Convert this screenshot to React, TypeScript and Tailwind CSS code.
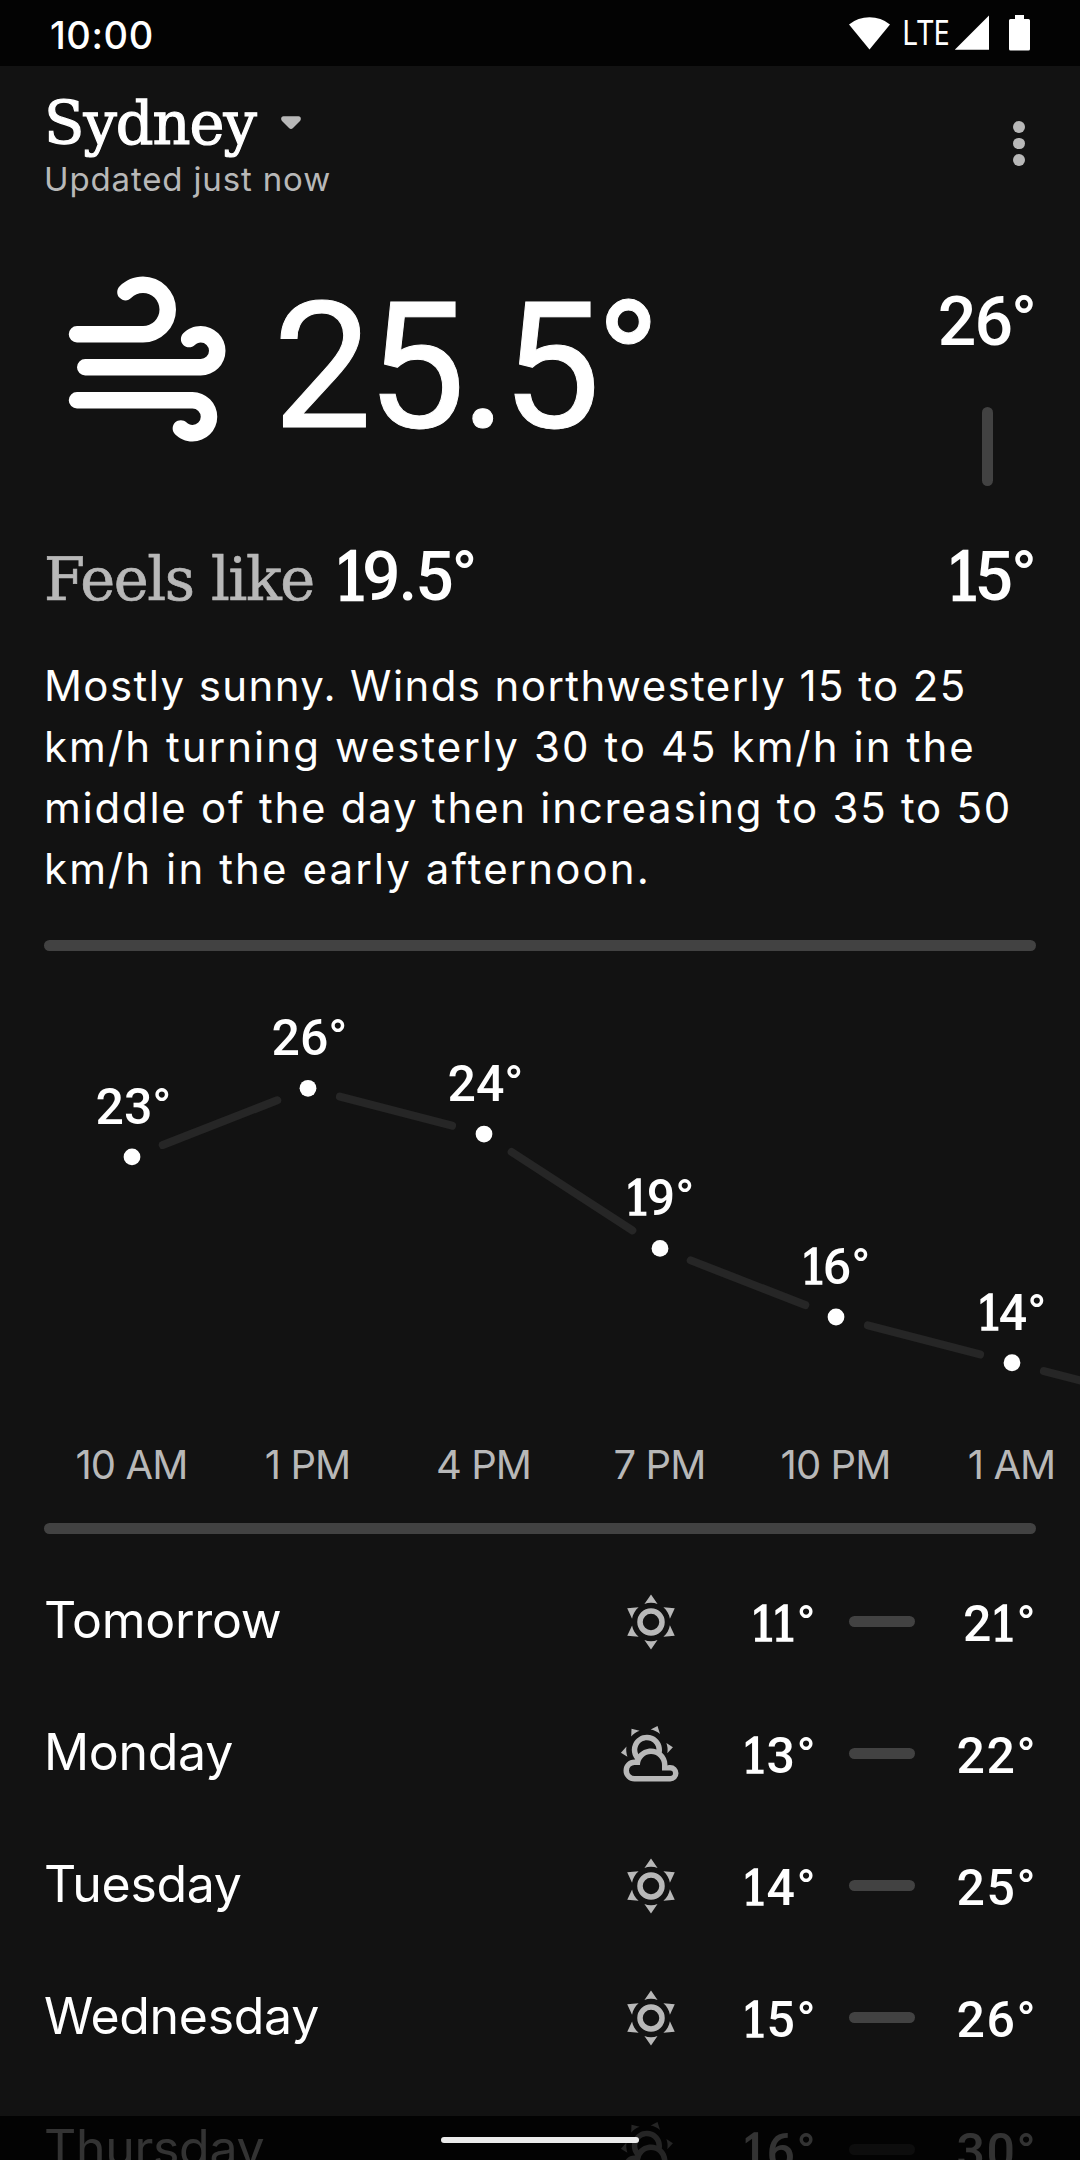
const SUN =
  "M12,7A5,5 0 0,1 17,12A5,5 0 0,1 12,17A5,5 0 0,1 7,12A5,5 0 0,1 12,7M12,9A3,3 0 0,0 9,12A3,3 0 0,0 12,15A3,3 0 0,0 15,12A3,3 0 0,0 12,9M12,2L14.39,5.42C13.65,5.15 12.84,5 12,5C11.16,5 10.35,5.15 9.61,5.42L12,2M3.34,7L7.5,6.65C6.9,7.16 6.36,7.78 5.94,8.5C5.5,9.24 5.25,10 5.11,10.79L3.34,7M3.36,17L5.12,13.23C5.26,14 5.53,14.78 5.95,15.5C6.37,16.24 6.91,16.86 7.5,17.37L3.36,17M20.65,7L18.88,10.79C18.74,10 18.47,9.23 18.05,8.5C17.63,7.78 17.1,7.15 16.5,6.64L20.65,7M20.64,17L16.5,17.36C17.09,16.85 17.62,16.22 18.04,15.5C18.46,14.77 18.73,14 18.87,13.21L20.64,17M12,22L9.59,18.56C10.33,18.83 11.14,19 12,19C12.82,19 13.63,18.83 14.37,18.56L12,22Z";
const PARTLY =
  "M12.74,5.47C15.1,6.5 16.35,9.03 15.92,11.46C17.19,12.56 18,14.19 18,16V16.17C18.31,16.06 18.65,16 19,16A3,3 0 0,1 22,19A3,3 0 0,1 19,22H6A4,4 0 0,1 2,18A4,4 0 0,1 6,14H6.27C5,12.45 4.6,10.24 5.5,8.26C6.72,5.5 9.97,4.24 12.74,5.47M11.93,7.3C10.16,6.5 8.09,7.31 7.31,9.07C6.85,10.09 6.93,11.22 7.41,12.13C8.5,10.83 10.16,10 12,10C12.7,10 13.38,10.12 14,10.34C13.94,9.06 13.18,7.86 11.93,7.3M13.55,3.64C13,3.4 12.45,3.23 11.88,3.12L14.37,1.82L15.27,4.71C14.76,4.29 14.19,3.93 13.55,3.64M6.09,4.44C5.6,4.79 5.17,5.19 4.8,5.63L4.91,2.82L7.87,3.5C7.25,3.71 6.65,4.03 6.09,4.44M18,9.71C17.91,9.12 17.78,8.55 17.59,8L19.97,9.5L17.92,11.73C18.03,11.08 18.05,10.4 18,9.71M3.04,11.3C3.11,11.9 3.24,12.47 3.43,13L1.06,11.5L3.1,9.28C2.97,9.93 2.97,10.61 3.04,11.3M19,18H16V16A4,4 0 0,0 12,12A4,4 0 0,0 8,16H6A2,2 0 0,0 4,18A2,2 0 0,0 6,20H19A1,1 0 0,0 20,19A1,1 0 0,0 19,18Z";
const WIND =
  "M4,10A1,1 0 0,1 3,9A1,1 0 0,1 4,8H12A2,2 0 0,0 14,6A2,2 0 0,0 12,4C11.45,4 10.95,4.22 10.59,4.59C10.2,5 9.56,5 9.17,4.59C8.78,4.2 8.78,3.56 9.17,3.17C9.9,2.45 10.9,2 12,2A4,4 0 0,1 16,6A4,4 0 0,1 12,10H4M19,12A1,1 0 0,0 20,11A1,1 0 0,0 19,10C18.72,10 18.47,10.11 18.29,10.29C17.9,10.68 17.27,10.68 16.88,10.29C16.5,9.9 16.5,9.27 16.88,8.88C17.42,8.34 18.17,8 19,8A3,3 0 0,1 22,11A3,3 0 0,1 19,14H5A1,1 0 0,1 4,13A1,1 0 0,1 5,12H19M18,18H4A1,1 0 0,1 3,17A1,1 0 0,1 4,16H18A3,3 0 0,1 21,19A3,3 0 0,1 18,22C17.17,22 16.42,21.66 15.88,21.12C15.5,20.73 15.5,20.1 15.88,19.71C16.27,19.32 16.9,19.32 17.29,19.71C17.47,19.89 17.72,20 18,20A1,1 0 0,0 19,19A1,1 0 0,0 18,18Z";

const SPACING = 176;
const PER_DEGREE = 22.87;

const hours = [
  { time: "10 AM", temp: 23 },
  { time: "1 PM", temp: 26 },
  { time: "4 PM", temp: 24 },
  { time: "7 PM", temp: 19 },
  { time: "10 PM", temp: 16 },
  { time: "1 AM", temp: 14 },
];

const days = [
  { name: "Tomorrow", icon: SUN, low: 11, high: 21 },
  { name: "Monday", icon: PARTLY, low: 13, high: 22 },
  { name: "Tuesday", icon: SUN, low: 14, high: 25 },
  { name: "Wednesday", icon: SUN, low: 15, high: 26 },
  { name: "Thursday", icon: PARTLY, low: 16, high: 30 },
];

const summary = [
  { text: "Mostly sunny. Winds northwesterly 15 to 25", tracking: "tracking-[1.4px]" },
  { text: "km/h turning westerly 30 to 45 km/h in the", tracking: "tracking-[2.07px]" },
  { text: "middle of the day then increasing to 35 to 50", tracking: "tracking-[1.75px]" },
  { text: "km/h in the early afternoon.", tracking: "tracking-[2.1px]" },
];

function Glyph({ d, className }: { d: string; className: string }) {
  return (
    <svg viewBox="0 0 24 24" className={className} fill="currentColor">
      <path d={d} />
    </svg>
  );
}

/* Temperature figures; the numeral one is set in a slab face. */
function Temp({ value, className, one = "mx-[-0.1em]" }: { value: string; className: string; one?: string }) {
  return (
    <span className={"whitespace-nowrap font-['Roboto',sans-serif] font-medium [font-kerning:none] " + className}>
      {value.split("").map((c, i) =>
        c === "1" ? (
          <span
            key={i}
            className={
              "font-['DejaVu_Serif_Condensed','DejaVu_Serif',serif] text-[0.965em] leading-[0] font-normal [-webkit-text-stroke:0.035em] " +
              one
            }
          >
            {c}
          </span>
        ) : (
          c
        ),
      )}
    </span>
  );
}

function StatusBar() {
  return (
    <div className="flex h-[66px] shrink-0 items-start bg-[#030303] pl-[50px]">
      <span className="mt-[11px] font-['Inter',sans-serif] text-[38px] leading-[48px] font-medium tracking-[0.6px]">
        10:00
      </span>
      <svg className="mt-[15px] ml-auto h-[35px] w-[41px]" viewBox="0 0 41 35" fill="white">
        <path d="M0 9.4A33 33 0 0 1 41 9.4L20.5 34.5Z" />
      </svg>
      <span className="mt-[8px] ml-[12px] w-[53px] origin-left scale-x-[0.87] font-['Noto_Sans',sans-serif] text-[34px] leading-[48px]">
        LTE
      </span>
      <svg className="mt-[15px] h-[35px] w-[34px]" viewBox="0 0 34 35" fill="white">
        <path d="M34 0.5V34.7H-0.3Z" />
      </svg>
      <svg className="mt-[15px] mr-[50px] ml-[20px] h-[36px] w-[21px]" viewBox="0 0 21 36" fill="white">
        <path d="M6 0H15V4H19.5A1.5 1.5 0 0 1 21 5.5V34A1.5 1.5 0 0 1 19.5 35.5H1.5A1.5 1.5 0 0 1 0 34V5.5A1.5 1.5 0 0 1 1.5 4H6Z" />
      </svg>
    </div>
  );
}

function Header() {
  return (
    <header className="flex h-[133px] shrink-0 justify-between pt-[26px] pr-[55.5px] pl-[44px]">
      <div>
        <div className="flex items-start">
          <h1 className="font-['DejaVu_Serif',serif] text-[59px] leading-[64px] tracking-[-1px] [-webkit-text-stroke:1.2px]">
            Sydney
          </h1>
          <svg className="mt-[24px] ml-[25px] h-[13px] w-[20px] text-[#b8b8b8]" viewBox="0 0 20 13" fill="currentColor">
            <path d="M2.5 0.2H17.5C19.8 0.2 20.6 3.2 19 5L12 12Q10 14 8 12L1 5C-0.6 3.2 0.2 0.2 2.5 0.2Z" />
          </svg>
        </div>
        <p className="mt-[3px] font-['Inter',sans-serif] text-[33px] leading-[40px] tracking-[0.85px] text-[#b8b8b8]">
          Updated just now
        </p>
      </div>
      <div className="flex flex-col gap-[5px] pt-[29px]">
        <i className="size-[11.5px] rounded-full bg-[#b8b8b8]" />
        <i className="size-[11.5px] rounded-full bg-[#b8b8b8]" />
        <i className="size-[11.5px] rounded-full bg-[#b8b8b8]" />
      </div>
    </header>
  );
}

function Current() {
  return (
    <section className="flex h-[418px] shrink-0 justify-between pr-[45px] pl-[44px]">
      <div className="pt-[60px]">
        <div className="flex h-[198px]">
          <Glyph d={WIND} className="mt-[0.5px] size-[198px] shrink-0" />
          <span className="mt-[9px] ml-[31px] font-['Roboto',sans-serif] text-[176px] leading-[198px] tracking-[-5.2px] whitespace-nowrap [-webkit-text-stroke:1px] [font-kerning:none]">
            25.5°
          </span>
        </div>
        <div className="mt-[80px] flex items-baseline">
          <span className="font-['DejaVu_Serif',serif] text-[59px] leading-[80px] tracking-[-1.4px] text-[#b8b8b8] [-webkit-text-stroke:0.7px]">
            Feels like
          </span>
          <Temp value="19.5°" className="ml-[26px] text-[68px] leading-[80px] tracking-[-0.033em]" />
        </div>
      </div>
      <div className="flex flex-col items-end pt-[83px]">
        <Temp value="26°" className="text-[68px] leading-[80px] tracking-[-0.03em]" />
        <div className="mt-[45px] mr-[42px] h-[79px] w-[11px] rounded-full bg-[#424242]" />
        <Temp value="15°" className="mt-[51px] text-[68px] leading-[80px] tracking-[-0.03em]" />
      </div>
    </section>
  );
}

function Divider({ className }: { className: string }) {
  return <div className={"mx-[44px] h-[11px] shrink-0 rounded-full bg-[#424242] " + className} />;
}

function Hourly() {
  const points = [...hours.map((h) => h.temp), 12].map((temp, i) => ({
    x: SPACING / 2 + i * SPACING,
    y: 137.3 + (26 - temp) * PER_DEGREE,
  }));
  return (
    <section className="shrink-0 overflow-hidden pl-[44px]">
      <div className="relative h-[489px]">
        <svg className="block h-[488px] w-[1036px]" viewBox="0 0 1036 488">
          {points.slice(1).map((p, i) => {
            const q = points[i];
            const len = Math.hypot(p.x - q.x, p.y - q.y);
            const dx = ((p.x - q.x) / len) * 33;
            const dy = ((p.y - q.y) / len) * 33;
            return (
              <line
                key={i}
                x1={q.x + dx}
                y1={q.y + dy}
                x2={p.x - dx}
                y2={p.y - dy}
                stroke="#262626"
                strokeWidth="8"
                strokeLinecap="round"
              />
            );
          })}
          {points.map((p, i) => (
            <circle key={i} cx={p.x} cy={p.y} r="8.4" fill="white" />
          ))}
        </svg>
        {hours.map((h, i) => (
          <div
            key={h.time}
            className="absolute flex w-[176px] justify-center pl-[3px]"
            style={{ left: i * SPACING, top: points[i].y - 80 }}
          >
            <Temp value={h.temp + "°"} className="text-[50px] leading-[60px] tracking-[0]" />
          </div>
        ))}
      </div>
      <div className="flex">
        {hours.map((h) => (
          <span
            key={h.time}
            className="w-[176px] shrink-0 pr-[1px] text-center font-['Inter',sans-serif] text-[40px] leading-[50px] tracking-[-0.9px] text-[#b8b8b8]"
          >
            {h.time}
          </span>
        ))}
      </div>
    </section>
  );
}

function Daily() {
  return (
    <section className="mt-[22px] shrink-0">
      {days.map((d) => (
        <div key={d.name} className="flex h-[132px] items-center pl-[44px]">
          <span className="w-[574px] pb-[4px] font-['Inter',sans-serif] text-[50px] leading-[60px] tracking-[-0.3px]">
            {d.name}
          </span>
          <Glyph d={d.icon} className="size-[66px] text-[#b8b8b8]" />
          <Temp
            value={d.low + "°"}
            one="mx-[-0.08em]"
            className="w-[133px] pt-[4px] text-right text-[50px] leading-[60px] tracking-[0.03em]"
          />
          <div className="mb-[1px] ml-[32px] h-[11px] w-[66px] rounded-full bg-[#424242]" />
          <Temp
            value={d.high + "°"}
            one="mx-[-0.06em]"
            className="w-[122px] pt-[4px] text-right text-[50px] leading-[60px] tracking-[0.03em]"
          />
        </div>
      ))}
    </section>
  );
}

export default function App() {
  return (
    <div className="relative flex h-[2160px] w-[1080px] flex-col overflow-hidden bg-[#121212] text-white">
      <StatusBar />
      <Header />
      <Current />
      <p className="mt-[38px] shrink-0 pl-[44px] font-['Inter',sans-serif] text-[42px] leading-[61px]">
        {summary.map((line) => (
          <span key={line.text} className={"block whitespace-nowrap " + line.tracking}>
            {line.text}
          </span>
        ))}
      </p>
      <Divider className="mt-[41px]" />
      <Hourly />
      <Divider className="mt-[33px]" />
      <Daily />
      <div className="absolute inset-x-0 bottom-0 flex h-[44px] justify-center bg-black/80 pt-[21px]">
        <div className="h-[6px] w-[198px] rounded-full bg-[#ebebeb]" />
      </div>
    </div>
  );
}
